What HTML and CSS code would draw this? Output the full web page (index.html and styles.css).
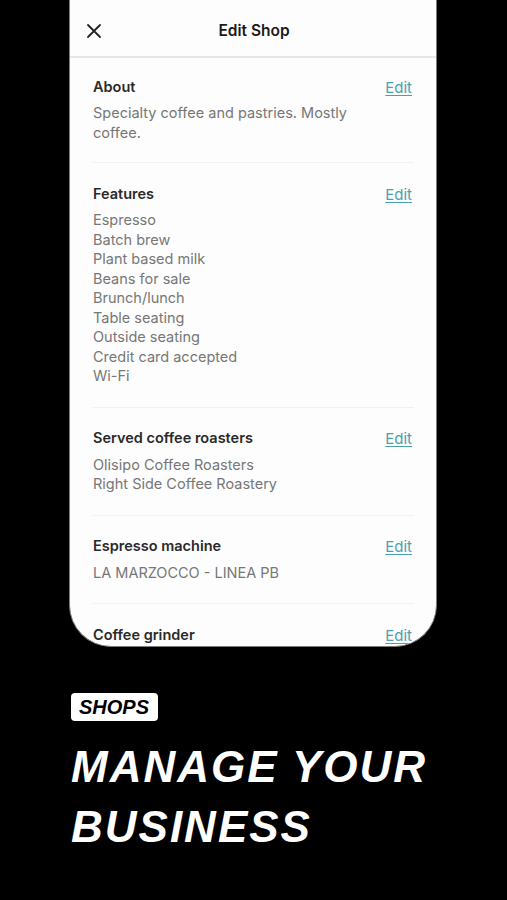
FILE: index.html
```html
<!DOCTYPE html>
<html lang="en">

<head>
    <meta charset="UTF-8">
    <meta name="viewport" content="width=device-width, initial-scale=1.0">
    <title>Edit Shop</title>
    <link rel="stylesheet" href="styles.css">
</head>

<body>
    <!-- phone screen -->
    <div class="phone">
        <div class="topbar">
            <svg class="close-icon" width="16" height="16" viewBox="0 0 16 16">
                <path d="M2 2 L14 14 M14 2 L2 14" stroke="#222" stroke-width="1.8" stroke-linecap="round" />
            </svg>
            <span class="topbar-title">Edit Shop</span>
        </div>

        <div class="sections">
            <div class="section">
                <div class="section-head">
                    <span class="section-title">About</span>
                    <a class="edit-link" href="#">Edit</a>
                </div>
                <div class="section-body">Specialty coffee and pastries. Mostly coffee.</div>
            </div>

            <div class="section">
                <div class="section-head">
                    <span class="section-title">Features</span>
                    <a class="edit-link" href="#">Edit</a>
                </div>
                <div class="section-body">
                    <div>Espresso</div>
                    <div>Batch brew</div>
                    <div>Plant based milk</div>
                    <div>Beans for sale</div>
                    <div>Brunch/lunch</div>
                    <div>Table seating</div>
                    <div>Outside seating</div>
                    <div>Credit card accepted</div>
                    <div>Wi-Fi</div>
                </div>
            </div>

            <div class="section">
                <div class="section-head">
                    <span class="section-title">Served coffee roasters</span>
                    <a class="edit-link" href="#">Edit</a>
                </div>
                <div class="section-body">
                    <div>Olisipo Coffee Roasters</div>
                    <div>Right Side Coffee Roastery</div>
                </div>
            </div>

            <div class="section">
                <div class="section-head">
                    <span class="section-title">Espresso machine</span>
                    <a class="edit-link" href="#">Edit</a>
                </div>
                <div class="section-body">LA MARZOCCO - LINEA PB</div>
            </div>

            <div class="section">
                <div class="section-head">
                    <span class="section-title">Coffee grinder</span>
                    <a class="edit-link" href="#">Edit</a>
                </div>
            </div>
        </div>
    </div>

    <!-- caption -->
    <div class="caption">
        <span class="badge">SHOPS</span>
        <h1 class="headline">MANAGE YOUR<br>BUSINESS</h1>
    </div>
</body>

</html>
```

FILE: styles.css
```css
/* page */
body {
    margin: 0;
    background-color: #000;
    font-family: "Inter", "Liberation Sans", sans-serif;
    width: 507px;
    height: 900px;
    overflow: hidden;
}

/* phone screen */
.phone {
    margin-left: 69px;
    width: 366px;
    height: 646px;
    background-color: #fdfdfd;
    border: 1.5px solid #7a7a7a;
    border-top: none;
    border-radius: 0 0 42px 42px;
    overflow: hidden;
}

.topbar {
    border-bottom: 2px solid #e6e6e6;
    display: flex;
    align-items: center;
    justify-content: center;
    position: relative;
    padding-top: 4px;
    box-sizing: border-box;
    height: 58px;
}

.close-icon {
    position: absolute;
    left: 16px;
    top: 23px;
}

.topbar-title {
    font-size: 15.5px;
    font-weight: 600;
    color: #1a1a1a;
    margin-left: 2px;
}

.sections {
    padding: 0 22px 0 23px;
}

.section {
    padding: 20px 0 21px 0;
    border-bottom: 1px solid #f1f1f1;
}

.section:first-child {
    padding-top: 18px;
    padding-bottom: 20px;
}

.section-head {
    display: flex;
    justify-content: space-between;
    align-items: center;
    height: 20px;
}

.section-title {
    font-size: 14.5px;
    font-weight: 600;
    color: #2a2a2a;
}

.edit-link {
    font-size: 15px;
    color: #4b9fb3;
    text-decoration: underline;
    text-underline-offset: 2px;
    margin-top: 2px;
    margin-right: 2px;
}

.section-body {
    margin-top: 7px;
    font-size: 14.5px;
    line-height: 19.5px;
    color: #777;
    padding-right: 60px;
}

/* caption */
.caption {
    padding: 46px 0 0 71px;
}

.badge {
    display: inline-block;
    background-color: #fff;
    color: #000;
    font-family: "Liberation Sans", sans-serif;
    font-weight: 700;
    font-style: italic;
    font-size: 20px;
    line-height: 28px;
    padding: 0 9px 0 8px;
    border-radius: 4px;
}

.headline {
    margin: 16px 0 0 0;
    color: #fff;
    font-family: "Liberation Sans", sans-serif;
    font-weight: 700;
    font-style: italic;
    font-size: 44px;
    line-height: 60px;
    letter-spacing: 2px;
}
```
